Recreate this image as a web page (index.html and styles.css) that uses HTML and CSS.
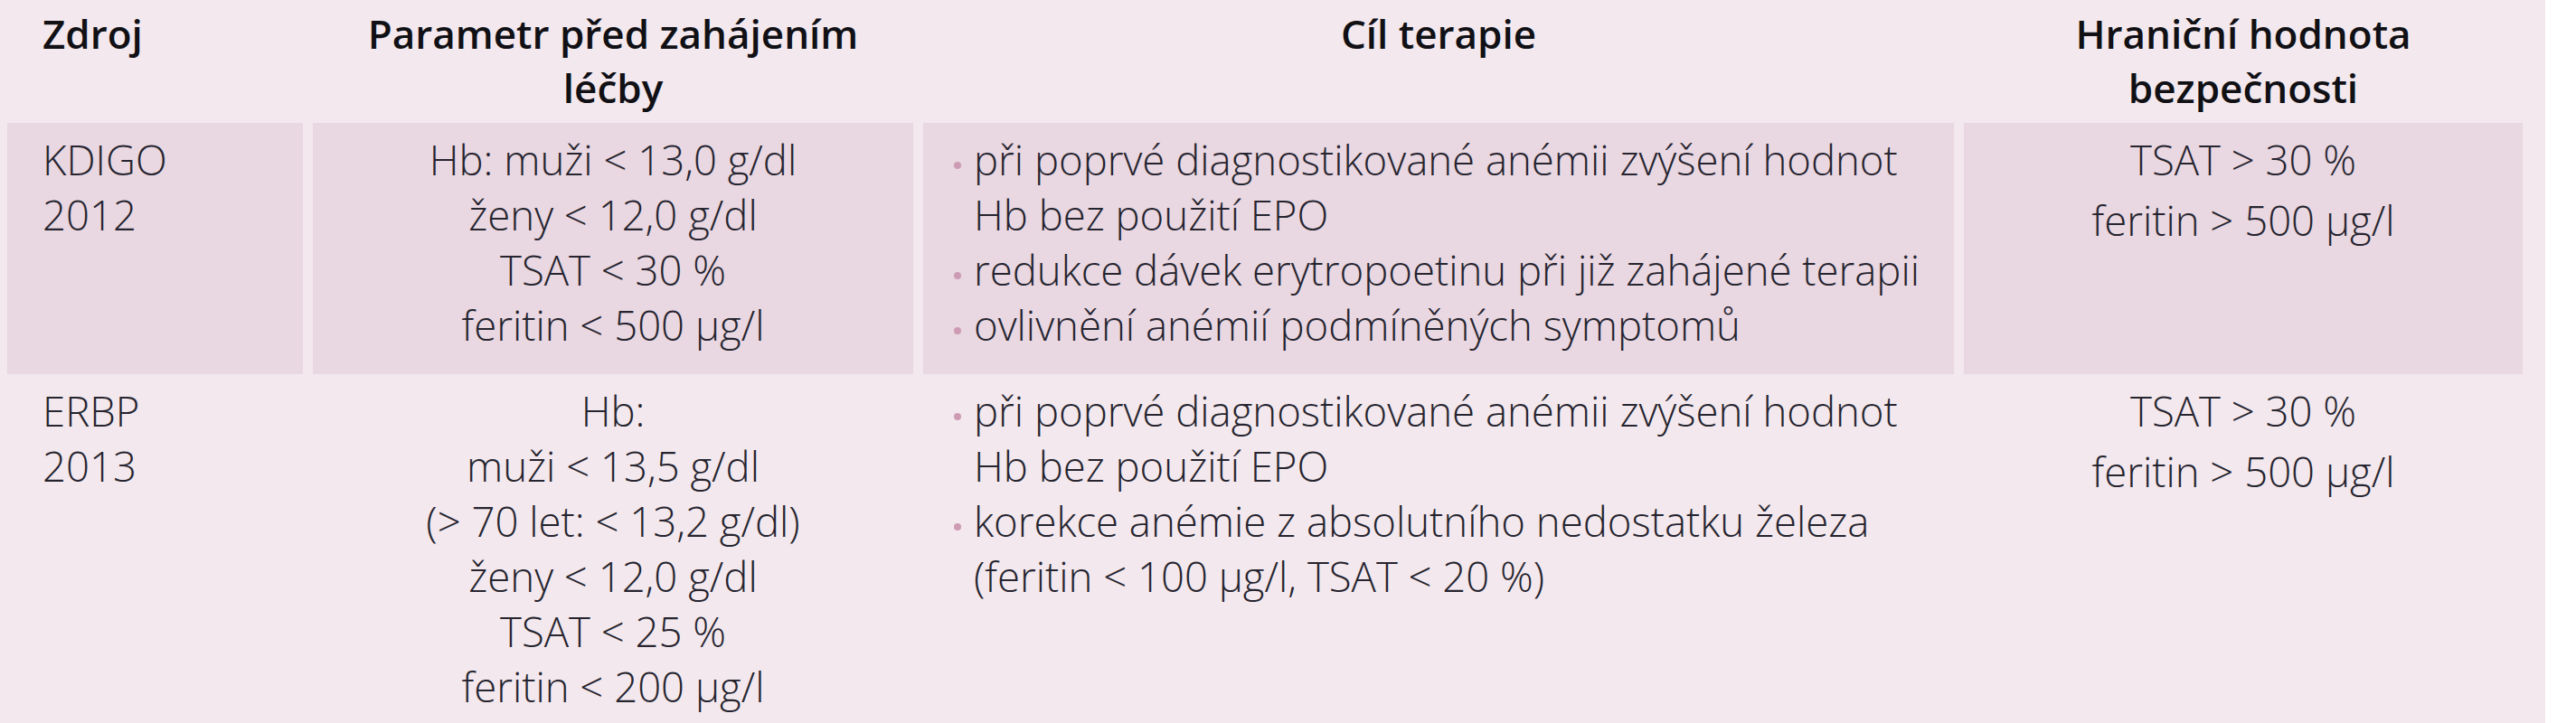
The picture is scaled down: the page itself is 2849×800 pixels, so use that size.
FILE: index.html
```html
<!DOCTYPE html>
<html lang="cs">
<head>
<meta charset="utf-8">
<title>Tabulka</title>
<link rel="stylesheet" href="styles.css">
</head>
<body>
<div class="page">
  <div class="table">
    <div class="th th-left">Zdroj</div>
    <div class="th">Parametr před zahájením léčby</div>
    <div class="th">Cíl terapie</div>
    <div class="th">Hraniční hodnota bezpečnosti</div>

    <div class="td shade src">KDIGO<br>2012</div>
    <div class="td shade center">
      <p>Hb: muži &lt; 13,0 g/dl</p>
      <p>ženy &lt; 12,0 g/dl</p>
      <p>TSAT &lt; 30 %</p>
      <p>feritin &lt; 500 µg/l</p>
    </div>
    <div class="td shade goals">
      <ul>
        <li>při poprvé diagnostikované anémii zvýšení hodnot Hb bez použití EPO</li>
        <li>redukce dávek erytropoetinu při již zahájené terapii</li>
        <li>ovlivnění anémií podmíněných symptomů</li>
      </ul>
    </div>
    <div class="td shade center limit">
      <p>TSAT &gt; 30 %</p>
      <p>feritin &gt; 500 µg/l</p>
    </div>

    <div class="td src">ERBP<br>2013</div>
    <div class="td center">
      <p>Hb:</p>
      <p>muži &lt; 13,5 g/dl</p>
      <p>(&gt; 70 let: &lt; 13,2 g/dl)</p>
      <p>ženy &lt; 12,0 g/dl</p>
      <p>TSAT &lt; 25 %</p>
      <p>feritin &lt; 200 µg/l</p>
    </div>
    <div class="td goals">
      <ul>
        <li>při poprvé diagnostikované anémii zvýšení hodnot Hb bez použití EPO</li>
        <li>korekce anémie z absolutního nedostatku železa (feritin &lt; 100 µg/l, TSAT &lt; 20 %)</li>
      </ul>
    </div>
    <div class="td center limit">
      <p>TSAT &gt; 30 %</p>
      <p>feritin &gt; 500 µg/l</p>
    </div>
  </div>
</div>
</body>
</html>
```
FILE: styles.css
```css
html, body {
  margin: 0;
  padding: 0;
  background: #ffffff;
}

.page {
  width: 2815px;
  min-height: 800px;
  box-sizing: border-box;
  padding-left: 8px;
  background: #f3e8ed;
  font-family: "Open Sans", "Noto Sans", "Liberation Sans", sans-serif;
  color: #25242f;
}

.table {
  display: grid;
  grid-template-columns: 327px 664px 1140px 618px;
  column-gap: 11px;
}

.th {
  font-size: 44px;
  font-weight: 600;
  line-height: 60px;
  color: #101015;
  text-align: center;
  padding: 7px 40px 9px;
}

.th-left {
  text-align: left;
  padding-left: 39px;
}

.td {
  font-size: 45.5px;
  font-weight: 300;
  line-height: 61px;
  padding: 10px 20px 24px;
}

.td p {
  margin: 0;
}

.shade {
  background: #e9d7e1;
}

.src {
  padding-left: 39px;
}

.center {
  text-align: center;
}

.limit p + p {
  margin-top: 6px;
}

.goals {
  padding-left: 34px;
}

.goals ul {
  list-style: none;
  margin: 0;
  padding: 0;
}

.goals li {
  display: flex;
}

.goals li::before {
  content: "";
  flex: none;
  width: 8px;
  height: 8px;
  margin-top: 33px;
  margin-right: 14px;
  border-radius: 50%;
  background: #cd9cb4;
}
```
